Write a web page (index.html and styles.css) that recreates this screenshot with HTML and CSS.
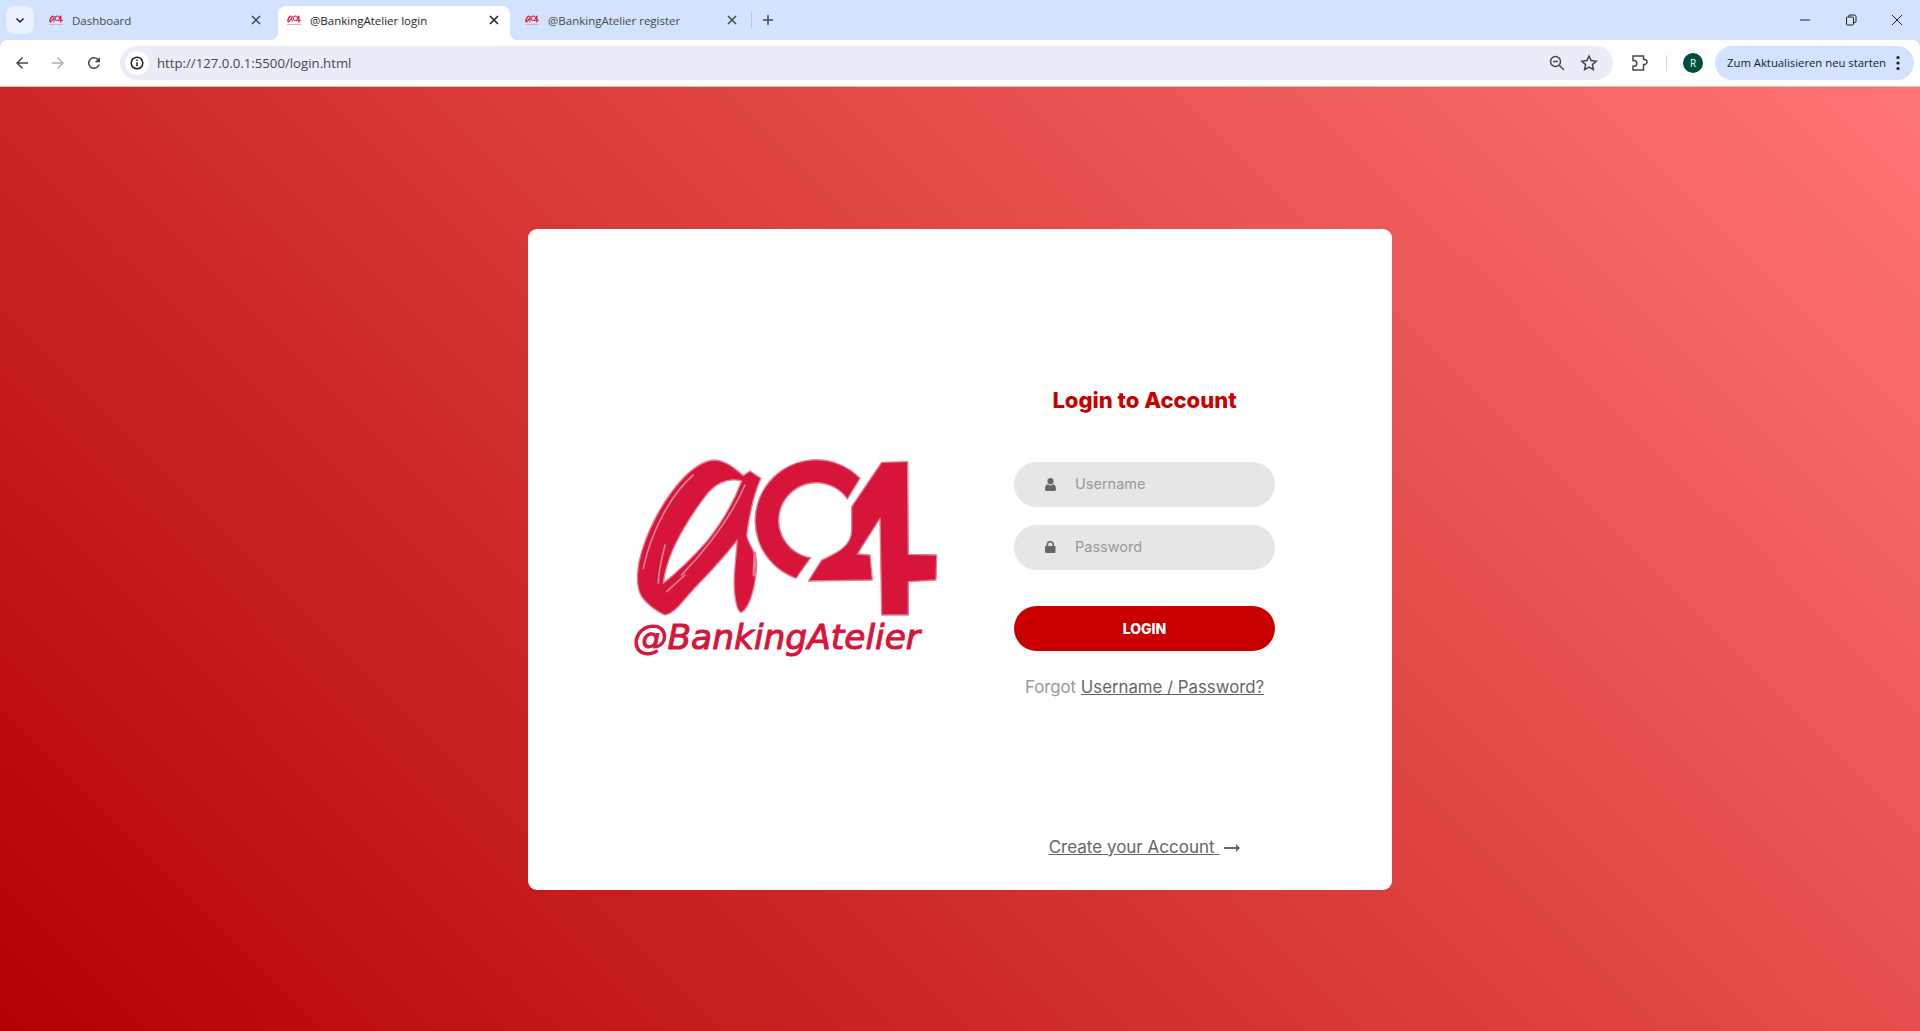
FILE: index.html
```html
<!DOCTYPE html>
<html lang="en">

<head>
    <meta charset="UTF-8">
    <title>@BankingAtelier login</title>
    <link rel="stylesheet" href="styles.css">
</head>

<body>
    <svg class="defs" width="0" height="0">
        <symbol id="ab-mark" viewBox="70 40 930 500">
            <g class="mark-shape">
                <path fill-rule="evenodd" transform="translate(60 45)" d="M250 15 C285 15 315 40 340 62 L360 48 L393 70 C372 115 358 180 350 240 C352 265 382 295 380 325 C378 390 360 460 333 473 C316 465 308 395 315 335 L322 255 C265 330 205 385 175 420 C150 450 130 475 105 480 C80 470 40 440 30 415 C18 385 20 335 35 290 C75 160 170 25 250 15 Z M335 78 C290 65 250 90 225 125 C180 185 110 290 100 385 C150 345 190 305 230 260 C270 210 310 145 335 78 Z" />
                <path d="M750 115 A183 183 0 1 0 558 415 L602 353 A113 113 0 1 1 712 177 Z" />
                <path d="M815 67 L893 65 L895 343 L980 345 L978 420 L895 425 L895 525 L815 525 L810 235 L742 342 L780 345 L787 420 L595 423 L635 360 C665 345 725 325 725 270 L725 200 Z" />
            </g>
            <g class="mark-light" transform="translate(60 45)">
                <path d="M190 60 C130 110 65 220 40 340" />
                <path d="M105 270 C95 310 85 350 85 385" />
                <path d="M345 90 C310 170 255 255 155 360" />
                <path d="M165 360 L110 410" />
                <path class="mark-wide" d="M375 295 L372 360" />
            </g>
        </symbol>
    </svg>

    <header class="browser">
        <div class="tabstrip">
            <button class="tab-search">
                <svg width="12" height="12" viewBox="0 0 12 12"><path class="line" d="M2.5 4.5 6 8l3.5-3.5" /></svg>
            </button>
            <div class="tab">
                <svg class="favicon"><use href="#ab-mark" /></svg>
                <span class="tab-title">Dashboard</span>
                <svg class="tab-close" viewBox="0 0 12 12"><path class="line" d="M2 2l8 8M10 2l-8 8" /></svg>
            </div>
            <div class="tab active">
                <svg class="favicon"><use href="#ab-mark" /></svg>
                <span class="tab-title">@BankingAtelier login</span>
                <svg class="tab-close" viewBox="0 0 12 12"><path class="line" d="M2 2l8 8M10 2l-8 8" /></svg>
            </div>
            <div class="tab">
                <svg class="favicon"><use href="#ab-mark" /></svg>
                <span class="tab-title">@BankingAtelier register</span>
                <svg class="tab-close" viewBox="0 0 12 12"><path class="line" d="M2 2l8 8M10 2l-8 8" /></svg>
            </div>
            <span class="tab-sep"></span>
            <svg class="new-tab" width="12" height="12" viewBox="0 0 12 12"><path class="line" d="M6 1v10M1 6h10" /></svg>
            <div class="window-btns">
                <span class="win-btn"><svg width="12" height="12" viewBox="0 0 12 12"><path class="thin" d="M1 6h10" /></svg></span>
                <span class="win-btn"><svg width="12" height="12" viewBox="0 0 12 12"><path class="thin" d="M1.5 4a1 1 0 0 1 1-1h5a1 1 0 0 1 1 1v6a1 1 0 0 1-1 1h-5a1 1 0 0 1-1-1zM3.5 3v-.5a1.5 1.5 0 0 1 1.5-1.5h4.5a1.5 1.5 0 0 1 1.5 1.5v5a1 1 0 0 1-1 1h-1" /></svg></span>
                <span class="win-btn"><svg width="12" height="12" viewBox="0 0 12 12"><path class="thin" d="M1 1l10 10M11 1L1 11" /></svg></span>
            </div>
        </div>

        <div class="toolbar">
            <button class="tool-btn">
                <svg width="18" height="18" viewBox="0 0 24 24"><path d="M20 11H7.83l5.59-5.59L12 4l-8 8 8 8 1.41-1.41L7.83 13H20z" /></svg>
            </button>
            <button class="tool-btn disabled">
                <svg width="18" height="18" viewBox="0 0 24 24"><path d="M4 11h12.17l-5.59-5.59L12 4l8 8-8 8-1.41-1.41L16.17 13H4z" /></svg>
            </button>
            <button class="tool-btn">
                <svg width="18" height="18" viewBox="0 0 24 24"><path d="M17.65 6.35A7.95 7.95 0 0 0 12 4c-4.42 0-7.99 3.58-7.99 8s3.57 8 7.99 8c3.73 0 6.84-2.55 7.73-6h-2.08A5.99 5.99 0 0 1 12 18c-3.31 0-6-2.69-6-6s2.69-6 6-6c1.66 0 3.14.69 4.22 1.78L13 11h7V4l-2.35 2.35z" /></svg>
            </button>

            <div class="omnibox">
                <span class="site-info">
                    <svg width="14" height="14" viewBox="0 0 14 14">
                        <circle class="line" cx="7" cy="7" r="5.8" />
                        <path class="line" d="M7 6.2v4M7 3.6v1.4" />
                    </svg>
                </span>
                <span class="url">http://127.0.0.1:5500/login.html</span>
                <svg class="omni-icon" width="16" height="16" viewBox="0 0 16 16">
                    <circle class="line" cx="6.5" cy="6.5" r="5" />
                    <path class="line" d="M4.2 6.5h4.6M10.2 10.2l4.8 4.8" />
                </svg>
                <svg class="omni-icon star" width="18" height="18" viewBox="0 0 18 18">
                    <path class="line" d="M9 2l2.1 4.6 5 .6-3.7 3.4 1 5L9 13.1l-4.4 2.5 1-5L1.900 7.200l5-.6z" />
                </svg>
            </div>

            <svg class="ext-icon" width="18" height="18" viewBox="0 0 18 18">
                <path class="line" d="M2 2h10.500v3.500h1a2.500 2.500 0 0 1 0 5h-1V16H2v-3.800h1a2.800 2.800 0 0 0 0-5.600H2z" />
            </svg>
            <span class="tool-sep"></span>
            <span class="avatar">R</span>
            <div class="update-pill">
                <span>Zum Aktualisieren neu starten</span>
                <svg width="4" height="16" viewBox="0 0 4 16">
                    <circle cx="2" cy="2.500" r="1.600" />
                    <circle cx="2" cy="8" r="1.600" />
                    <circle cx="2" cy="13.500" r="1.600" />
                </svg>
            </div>
        </div>
    </header>

    <main class="page">
        <section class="card">
            <div class="logo-col">
                <svg class="logo" viewBox="0 0 1020 690" role="img" aria-label="@BankingAtelier logo">
                    <use href="#ab-mark" x="70" y="40" width="930" height="500" />
                    <text class="logo-text" x="69" y="626" textLength="861" lengthAdjust="spacingAndGlyphs">@BankingAtelier</text>
                </svg>
            </div>

            <form class="login-form">
                <h1 class="form-title">Login to Account</h1>

                <label class="field">
                    <svg class="field-icon" width="11" height="13" viewBox="0 0 11 13">
                        <circle cx="5.500" cy="3.200" r="3.100" />
                        <path d="M0 11.300C0 8.800.7 6.900 2.600 6.300c.8.700 1.800 1.100 2.900 1.100s2.100-.4 2.900-1.100c1.900.6 2.600 2.500 2.600 5 0 1-.7 1.700-1.700 1.700H1.700C.7 13 0 12.300 0 11.300z" />
                    </svg>
                    <input type="text" placeholder="Username">
                </label>

                <label class="field">
                    <svg class="field-icon" width="11" height="12" viewBox="0 0 11 12">
                        <path d="M1 5h.6V3.600a3.700 3.700 0 0 1 7.400 0V5h.6c.5 0 .9.400.9.900v5.200c0 .5-.4.900-.9.900H1c-.5 0-1-.4-1-.9V5.900C0 5.400.5 5 1 5zm2.200 0h4.200V3.600a2.100 2.100 0 0 0-4.200 0z" />
                    </svg>
                    <input type="password" placeholder="Password">
                </label>

                <button class="login-btn" type="button">LOGIN</button>

                <p class="forgot">Forgot <a href="#">Username / Password?</a></p>

                <p class="create">
                    <a href="#">Create your Account </a>
                    <svg width="16" height="10" viewBox="0 0 16 10"><path d="M0 4h12V1l4 4-4 4V6H0z" /></svg>
                </p>
            </form>
        </section>
    </main>
</body>

</html>
```

FILE: styles.css
```css
* {
    box-sizing: border-box;
}

body {
    margin: 0;
    height: 100vh;
    display: flex;
    flex-direction: column;
    overflow: hidden;
    font-family: "Inter", "Liberation Sans", sans-serif;
}

button {
    border: 0;
    padding: 0;
    background: none;
    font: inherit;
}

.defs {
    display: block;
}

.line {
    fill: none;
    stroke: currentColor;
    stroke-width: 1.5;
}

.thin {
    fill: none;
    stroke: #1f1f1f;
    stroke-width: 1;
}

/* Browser chrome */
.browser {
    font-family: "Open Sans", "Noto Sans", sans-serif;
    color: #474747;
    background-color: #d3e3fd;
}

.tabstrip {
    height: 40px;
    display: flex;
    align-items: flex-end;
    padding-left: 6px;
}

.tab-search {
    width: 28px;
    height: 28px;
    margin: 0 6px 6px 0;
    display: flex;
    align-items: center;
    justify-content: center;
    border-radius: 9px;
    background-color: #e9f0fe;
    color: #1f1f1f;
}

.tab {
    width: 232px;
    height: 34px;
    margin-right: 6px;
    padding: 0 8px 6px 9px;
    display: flex;
    align-items: center;
    gap: 9px;
    border-radius: 8px 8px 0 0;
    font-size: 11.5px;
    position: relative;
}

.tab.active {
    background-color: #fff;
    color: #1f1f1f;
}

.tab.active::before,
.tab.active::after {
    content: "";
    position: absolute;
    bottom: 0;
    width: 8px;
    height: 8px;
}

.tab.active::before {
    left: -8px;
    background: radial-gradient(circle at 0 0, transparent 8px, #fff 8.5px);
}

.tab.active::after {
    right: -8px;
    background: radial-gradient(circle at 100% 0, transparent 8px, #fff 8.5px);
}

.favicon {
    width: 14px;
    height: 10px;
    padding-bottom: 1px;
    border-bottom: 1px solid #eda9b8;
    flex: none;
}

.tab-title {
    flex: 1;
    white-space: nowrap;
}

.tab-close {
    width: 12px;
    height: 12px;
    margin-right: 2px;
    flex: none;
}

.tab-sep {
    width: 1px;
    height: 18px;
    margin: 0 0 11px -3px;
    background-color: #a8c7fa;
}

.new-tab {
    margin: 0 0 14px 10px;
    color: #474747;
}

.window-btns {
    margin-left: auto;
    align-self: stretch;
    display: flex;
}

.win-btn {
    width: 46px;
    display: flex;
    align-items: center;
    justify-content: center;
}

.toolbar {
    height: 47px;
    padding: 6px 6px 7px 4px;
    display: flex;
    align-items: center;
    background-color: #fff;
    border-radius: 8px 8px 0 0;
    border-bottom: 1px solid #c7c7c7;
}

.tool-btn {
    width: 36px;
    height: 34px;
    display: flex;
    align-items: center;
    justify-content: center;
    fill: #474747;
}

.tool-btn.disabled {
    fill: #b0b0b0;
}

.omnibox {
    flex: 1;
    height: 34px;
    margin-left: 8px;
    padding: 0 15px 0 5px;
    display: flex;
    align-items: center;
    background-color: #e9edf7;
    border-radius: 17px;
    color: #474747;
}

.site-info {
    width: 24px;
    height: 24px;
    display: flex;
    align-items: center;
    justify-content: center;
    background-color: #fff;
    border-radius: 50%;
    color: #1f1f1f;
}

.url {
    margin-left: 8px;
    flex: 1;
    font-size: 13.2px;
}

.star {
    margin-left: 15px;
}

.ext-icon {
    margin-left: 18px;
    flex: none;
}

.tool-sep {
    width: 1px;
    height: 16px;
    margin-left: 17px;
    background-color: #c7daf8;
}

.avatar {
    width: 20px;
    height: 20px;
    margin-left: 16px;
    display: flex;
    align-items: center;
    justify-content: center;
    border-radius: 50%;
    background-color: #004d40;
    color: #fff;
    font-size: 10px;
}

.update-pill {
    width: 199px;
    height: 34px;
    margin-left: 12px;
    padding: 0 14px 0 12px;
    display: flex;
    align-items: center;
    justify-content: space-between;
    border-radius: 17px;
    background-color: #d3e3fd;
    color: #041e49;
    fill: #041e49;
    font-size: 11.3px;
    white-space: nowrap;
}

/* Logo */
.mark-shape path {
    fill: #d7153a;
    stroke: #e27f94;
    stroke-width: 4;
    stroke-linejoin: round;
}

.mark-light path {
    fill: none;
    stroke: #e27f94;
    stroke-width: 5;
    stroke-linecap: round;
}

.mark-light .mark-wide {
    stroke-width: 9;
}

.logo-col {
    padding-top: 52px;
}

.logo {
    display: block;
    width: 340px;
    height: 230px;
}

.logo-text {
    font-family: "DejaVu Sans", sans-serif;
    font-style: oblique;
    font-size: 100px;
    fill: #d7153a;
    stroke: #d7153a;
    stroke-width: 3;
}

/* Login page */
.page {
    flex: 1;
    display: flex;
    align-items: center;
    justify-content: center;
    background: linear-gradient(-135deg, #ff7575, #b30000);
}

.card {
    width: 864px;
    height: 661px;
    padding: 159px 117px 33px 82px;
    display: flex;
    justify-content: space-between;
    background-color: #fff;
    border-radius: 9px;
}

.login-form {
    width: 261px;
    display: flex;
    flex-direction: column;
}

.form-title {
    margin: 0 0 48px;
    font-size: 22px;
    line-height: 25px;
    padding-bottom: 1px;
    font-weight: 800;
    text-align: center;
    color: #c80000;
}

.field {
    height: 45px;
    margin-bottom: 18px;
    padding-left: 31px;
    display: flex;
    align-items: center;
    background-color: #e6e6e6;
    border-radius: 23px;
}

.field-icon {
    width: 30px;
    flex: none;
    fill: #666;
    padding-right: 19px;
    overflow: visible;
}

.field input {
    flex: 1;
    min-width: 0;
    height: 100%;
    border: 0;
    padding: 0 0 1px;
    outline: 0;
    background: none;
    font-family: inherit;
    font-size: 14.5px;
    color: #666;
}

.field input::placeholder {
    color: #999;
    opacity: 1;
}

.login-btn {
    height: 45px;
    margin-top: 18px;
    padding-top: 1px;
    border-radius: 23px;
    background-color: #c80000;
    color: #fff;
    font-size: 14px;
    font-weight: 800;
}

.forgot {
    margin: 26px 0 0;
    line-height: 20px;
    font-size: 16.8px;
    text-align: center;
    color: #999;
}

.create {
    margin: auto 0 0;
    padding-top: 1px;
    line-height: 20px;
    font-size: 17px;
    text-align: center;
    white-space: nowrap;
}

a {
    color: #666;
}

.create svg {
    margin-left: 5px;
    fill: #666;
}
```
